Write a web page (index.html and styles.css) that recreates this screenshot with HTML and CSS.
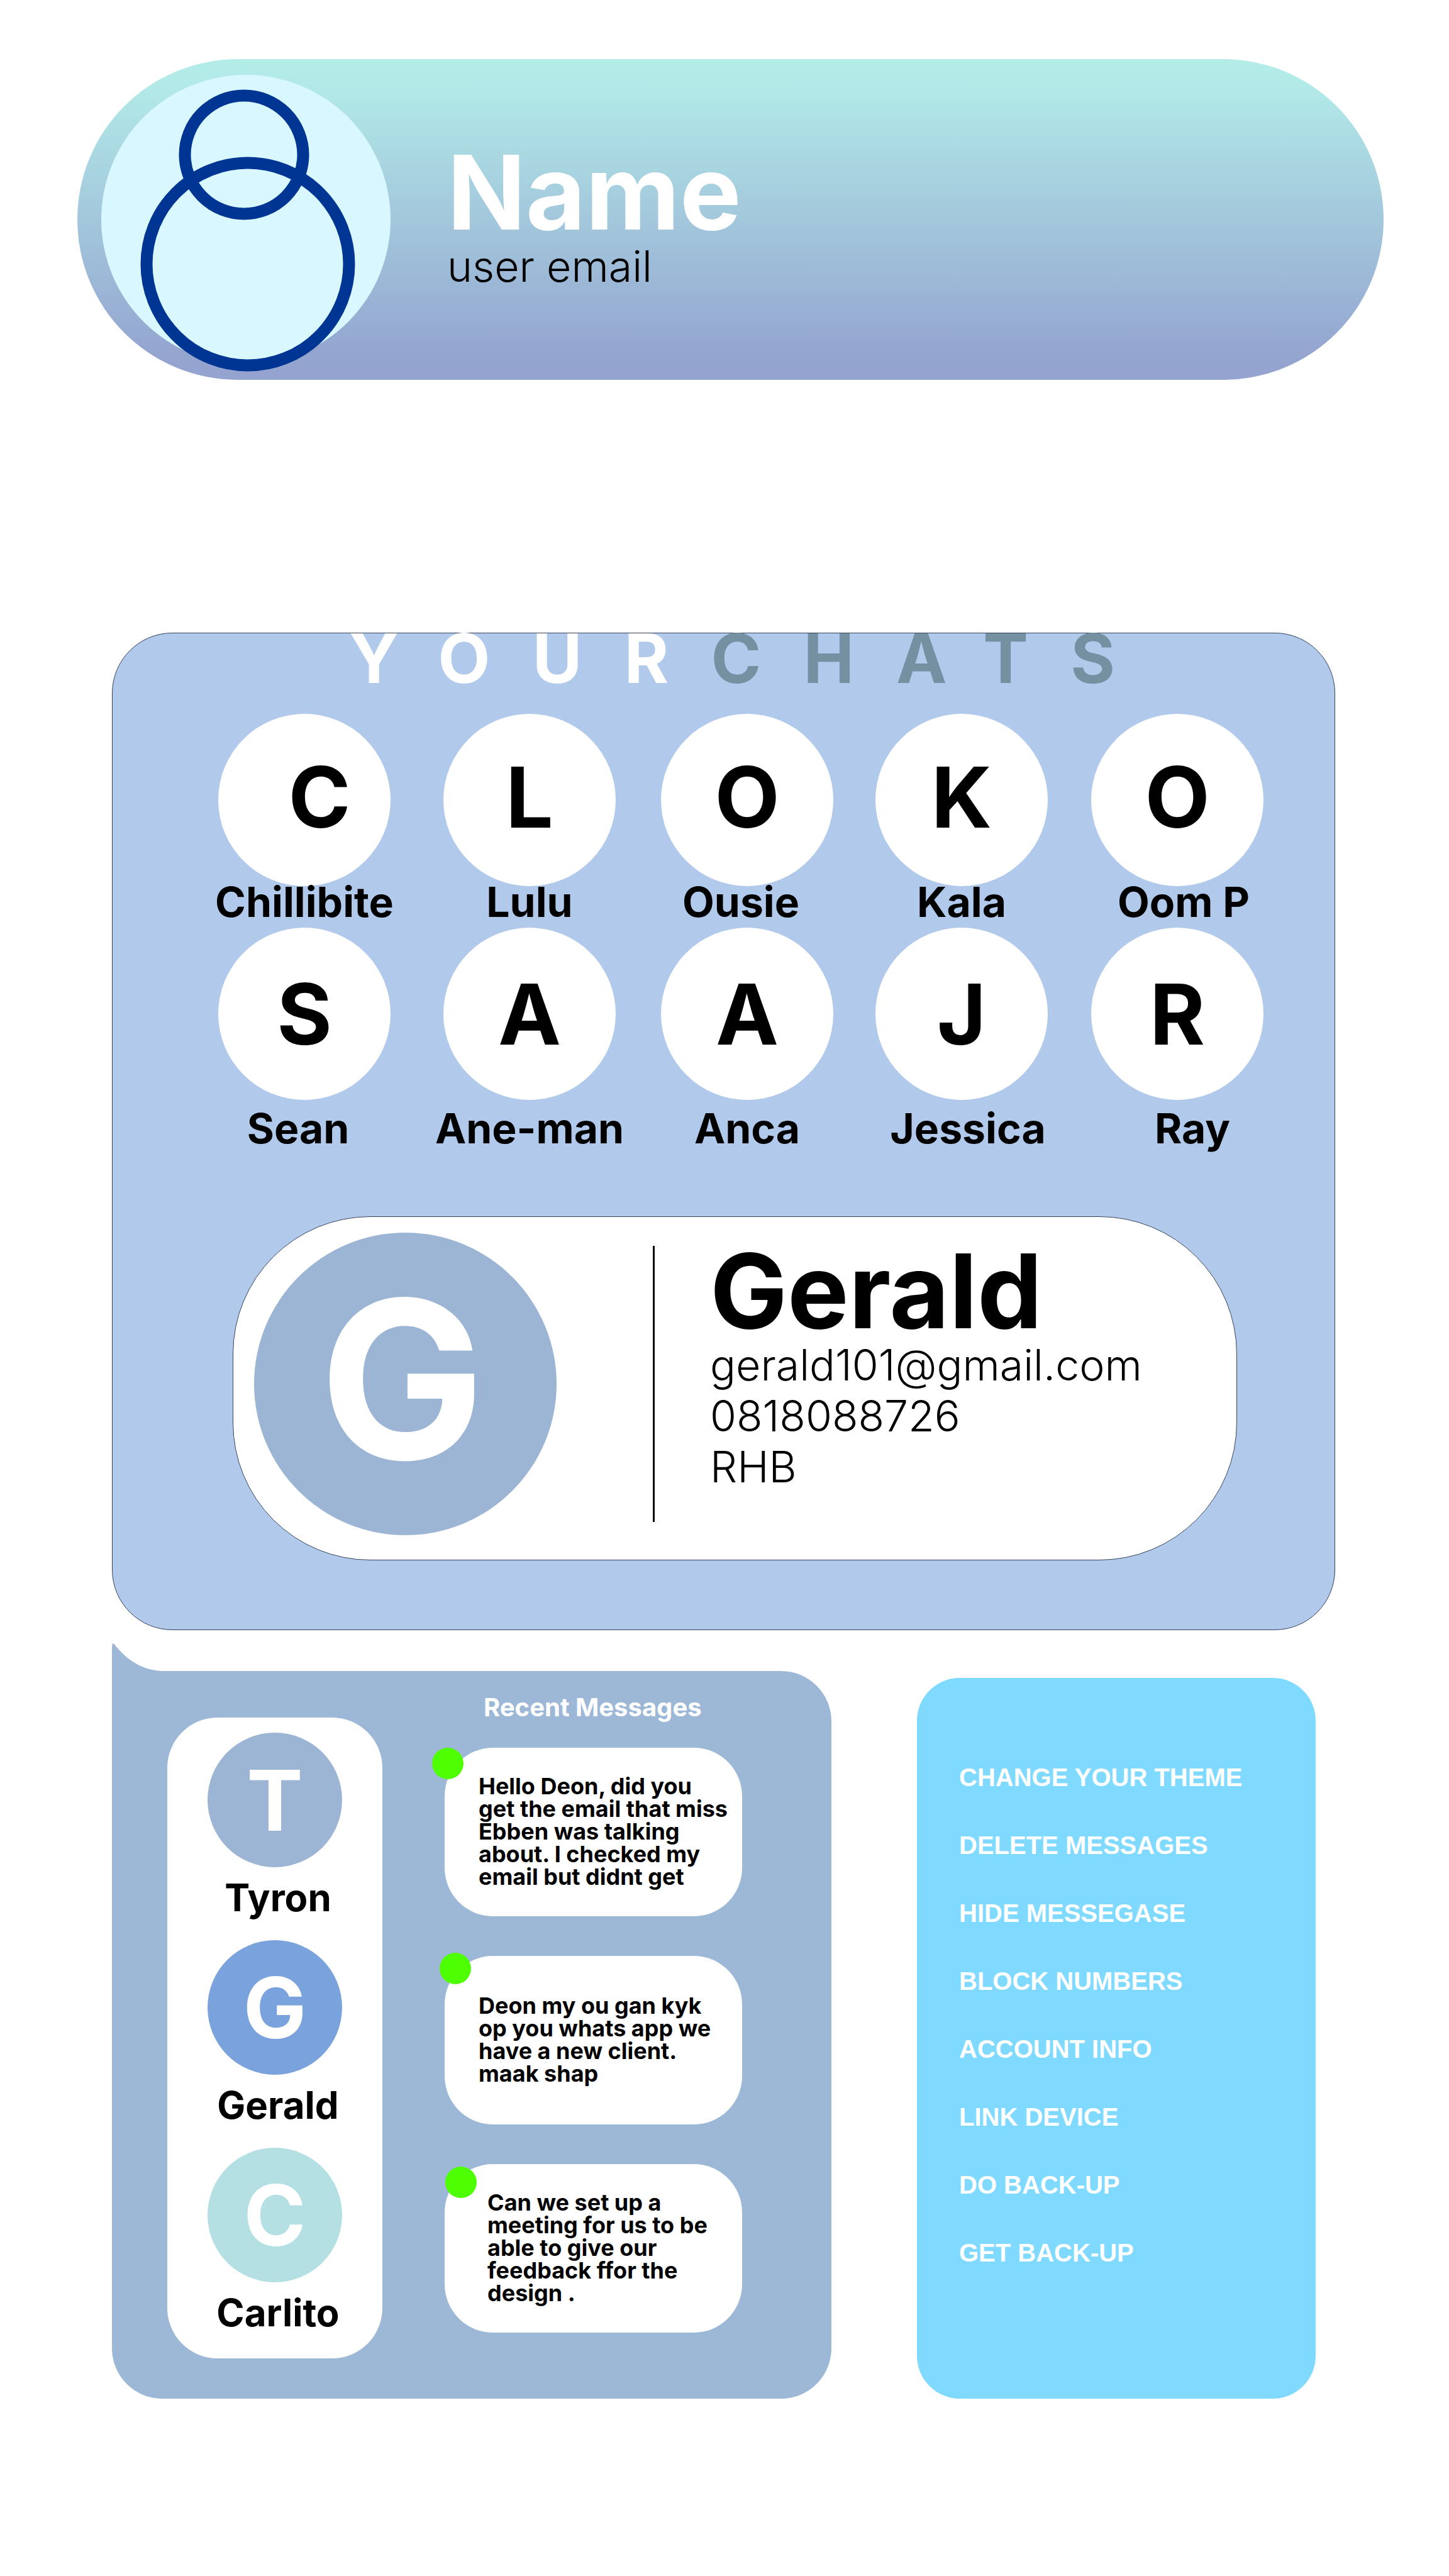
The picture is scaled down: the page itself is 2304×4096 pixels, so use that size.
FILE: index.html
```html
<!DOCTYPE html>
<html lang="en">
<head>
<meta charset="utf-8">
<meta name="viewport" content="width=device-width, initial-scale=1">
<title>Your Chats</title>
<link rel="stylesheet" href="styles.css">
</head>
<body>
<header class="profile">
  <svg class="profile-avatar" viewBox="0 0 460 480" aria-hidden="true">
    <circle cx="230" cy="230" r="230" fill="#d9f7ff"/>
    <g fill="none" stroke="#003594" stroke-width="19">
      <circle cx="227" cy="127" r="94"/>
      <circle cx="233" cy="301" r="161"/>
    </g>
  </svg>
  <div>
    <h1 class="display">Name</h1>
    <p class="detail">user email</p>
  </div>
</header>

<main>
  <section class="chats">
    <h2 class="chats-title"><span>YOUR</span><span class="muted">CHATS</span></h2>
    <nav class="contacts" aria-label="Contacts">
      <a class="contact raised" href="#"><span class="initial lean-far">C</span><span class="contact-name">Chillibite</span></a>
      <a class="contact raised" href="#"><span class="initial">L</span><span class="contact-name">Lulu</span></a>
      <a class="contact raised" href="#"><span class="initial">O</span><span class="contact-name lean-left">Ousie</span></a>
      <a class="contact raised" href="#"><span class="initial">K</span><span class="contact-name">Kala</span></a>
      <a class="contact raised" href="#"><span class="initial">O</span><span class="contact-name lean-right">Oom P</span></a>
      <a class="contact spaced" href="#"><span class="initial">S</span><span class="contact-name lean-left">Sean</span></a>
      <a class="contact spaced" href="#"><span class="initial">A</span><span class="contact-name">Ane-man</span></a>
      <a class="contact spaced" href="#"><span class="initial">A</span><span class="contact-name">Anca</span></a>
      <a class="contact spaced" href="#"><span class="initial">J</span><span class="contact-name lean-right">Jessica</span></a>
      <a class="contact spaced" href="#"><span class="initial">R</span><span class="contact-name lean-far">Ray</span></a>
    </nav>
    <article class="card">
      <div class="card-initial">G</div>
      <div class="card-details">
        <h3 class="display">Gerald</h3>
        <p class="detail">gerald101@gmail.com</p>
        <p class="detail">0818088726</p>
        <p class="detail">RHB</p>
      </div>
    </article>
  </section>

  <div class="lower">
    <section class="recent">
      <svg class="recent-tail" viewBox="0 0 84 46" aria-hidden="true">
        <path d="M0 14C0-1 1-1 5 4C24 28 50 45 83 45V46H0Z" fill="#9db8d7"/>
      </svg>
      <ul class="people">
        <li class="person"><span class="initial steel">T</span><span class="person-name">Tyron</span></li>
        <li class="person"><span class="initial blue">G</span><span class="person-name">Gerald</span></li>
        <li class="person"><span class="initial aqua">C</span><span class="person-name">Carlito</span></li>
      </ul>
      <div class="messages">
        <h2 class="messages-title">Recent Messages</h2>
        <p class="message">Hello Deon, did you<br>get the email that miss<br>Ebben was talking<br>about. I checked my<br>email but didnt get</p>
        <p class="message second">Deon my ou gan kyk<br>op you whats app we<br>have a new client.<br>maak shap</p>
        <p class="message third">Can we set up a<br>meeting for us to be<br>able to give our<br>feedback ffor the<br>design .</p>
      </div>
    </section>

    <nav class="settings" aria-label="Settings">
      <button type="button">CHANGE YOUR THEME</button>
      <button type="button">DELETE MESSAGES</button>
      <button type="button">HIDE MESSEGASE</button>
      <button type="button">BLOCK NUMBERS</button>
      <button type="button">ACCOUNT INFO</button>
      <button type="button">LINK DEVICE</button>
      <button type="button">DO BACK-UP</button>
      <button type="button">GET BACK-UP</button>
    </nav>
  </div>
</main>
</body>
</html>
```
FILE: styles.css
```css
* { box-sizing: border-box; }

body {
  margin: 0;
  padding: 94px 0 0;
  background: #fff;
  color: #000;
  font-family: "Century Gothic", Inter, sans-serif;
}

h1, h2, h3, p, ul { margin: 0; padding: 0; }
ul { list-style: none; }
a { color: inherit; text-decoration: none; }

.display {
  margin-bottom: 5px;
  font-size: 164px;
  line-height: 144px;
  font-weight: 700;
}

.detail {
  font-size: 68px;
  line-height: 81px;
  font-weight: 300;
}

/* Profile banner */
.profile {
  display: flex;
  align-items: center;
  gap: 90px;
  height: 510px;
  margin: 0 104px 0 123px;
  padding-left: 38px;
  border-radius: 255px;
  background: linear-gradient(#b4ece8, #b2eae8 8%, #94a5d0 92%, #94a3cf);
}
.profile-avatar { width: 460px; height: 480px; margin-top: 20px; }
.profile .display { color: #fff; }

/* Chats panel */
.chats {
  margin: 402px 181px 0 178px;
  padding-bottom: 110px;
  border: 1px solid #34435c;
  border-radius: 96px;
  background: #b1c9eb;
}
.chats-title {
  padding-left: 376px;
  font-size: 108px;
  line-height: 80px;
  font-weight: 700;
  letter-spacing: 67px;
  white-space: nowrap;
  color: #fff;
}
.muted { color: #7590a0; }

.contacts {
  display: grid;
  grid-template-columns: minmax(0, 358fr) minmax(0, 346fr) minmax(0, 341fr) minmax(0, 343fr) minmax(0, 274fr);
  row-gap: 16px;
  margin: 48px 113px 0 168px;
}
.contact {
  display: flex;
  flex-direction: column;
  align-items: center;
  width: 274px;
}
.initial {
  display: flex;
  align-items: center;
  justify-content: center;
  width: 274px;
  height: 274px;
  border-radius: 50%;
  background: #fff;
  font-size: 134px;
  line-height: 134px;
  font-weight: 700;
}
.contact-name {
  font-size: 66px;
  line-height: 50px;
  font-weight: 700;
  white-space: nowrap;
}
.raised .initial { padding-bottom: 10px; }
.spaced { gap: 20px; }
.lean-left { padding-right: 20px; }
.lean-right { padding-left: 20px; }
.lean-far { padding-left: 48px; }

/* Selected contact */
.card {
  display: flex;
  align-items: center;
  gap: 153px;
  min-height: 547px;
  margin: 115px 155px 0 191px;
  padding: 0 0 14px 33px;
  border: 1px solid #34435c;
  border-radius: 219px;
  background: #fff;
}
.card-initial {
  display: flex;
  align-items: center;
  justify-content: center;
  width: 481px;
  height: 481px;
  padding: 0 10px 16px 0;
  border-radius: 50%;
  background: #9cb5d4;
  color: #fff;
  font-size: 350px;
  line-height: 350px;
  font-weight: 700;
}
.card-details {
  min-height: 439px;
  padding-left: 88px;
  border-left: 3px solid #000;
}

/* Lower row */
.lower {
  display: grid;
  grid-template-columns: minmax(0, 1144fr) minmax(0, 634fr);
  column-gap: 136px;
  margin: 65px 212px 0 178px;
}

.recent {
  position: relative;
  display: grid;
  grid-template-columns: 342px 473px;
  column-gap: 99px;
  min-height: 1157px;
  padding: 74px 0 64px 88px;
  border-radius: 0 80px 80px 80px;
  background: #9db8d7;
}
.recent-tail {
  position: absolute;
  top: -45px;
  left: 0;
  width: 84px;
  height: 46px;
}

.people {
  display: flex;
  flex-direction: column;
  gap: 43px;
  padding-top: 24px;
  border-radius: 80px;
  background: #fff;
}
.person {
  display: flex;
  flex-direction: column;
  align-items: center;
  gap: 23px;
}
.person .initial { width: 214px; height: 214px; color: #fff; }
.person .steel { background: #9cb5d4; }
.person .blue { background: #7aa3dd; }
.person .aqua { background: #b4e0e4; }
.person-name {
  padding-left: 10px;
  font-size: 60px;
  line-height: 50px;
  font-weight: 700;
}

.messages {
  display: flex;
  flex-direction: column;
  gap: 63px;
}
.messages-title {
  margin: -34px 0 -17px 62px;
  font-size: 40px;
  line-height: 36px;
  font-weight: 700;
  white-space: nowrap;
  color: #fff;
}
.message {
  position: relative;
  display: flex;
  align-items: center;
  min-height: 268px;
  padding: 0 0 2px 54px;
  border-radius: 77px;
  background: #fff;
  font-size: 36px;
  line-height: 36px;
  font-weight: 700;
  white-space: nowrap;
}
.third { padding-left: 68px; }

/* Unread marker on the bubble's corner */
.message::before {
  content: "";
  position: absolute;
  top: 0;
  left: -20px;
  width: 50px;
  height: 50px;
  border-radius: 50%;
  background: #4dff00;
}
.second::before { top: -5px; left: -8px; }
.third::before { top: 4px; left: 1px; }

.settings {
  display: flex;
  flex-direction: column;
  align-items: flex-start;
  gap: 68px;
  margin-top: 11px;
  padding: 138px 0 0 67px;
  border-radius: 68px;
  background: #80daff;
}
.settings button {
  padding: 0;
  border: 0;
  background: none;
  color: #fff;
  font-family: Arial, "Liberation Sans", sans-serif;
  font-size: 40px;
  line-height: 40px;
  font-weight: 700;
}
```
